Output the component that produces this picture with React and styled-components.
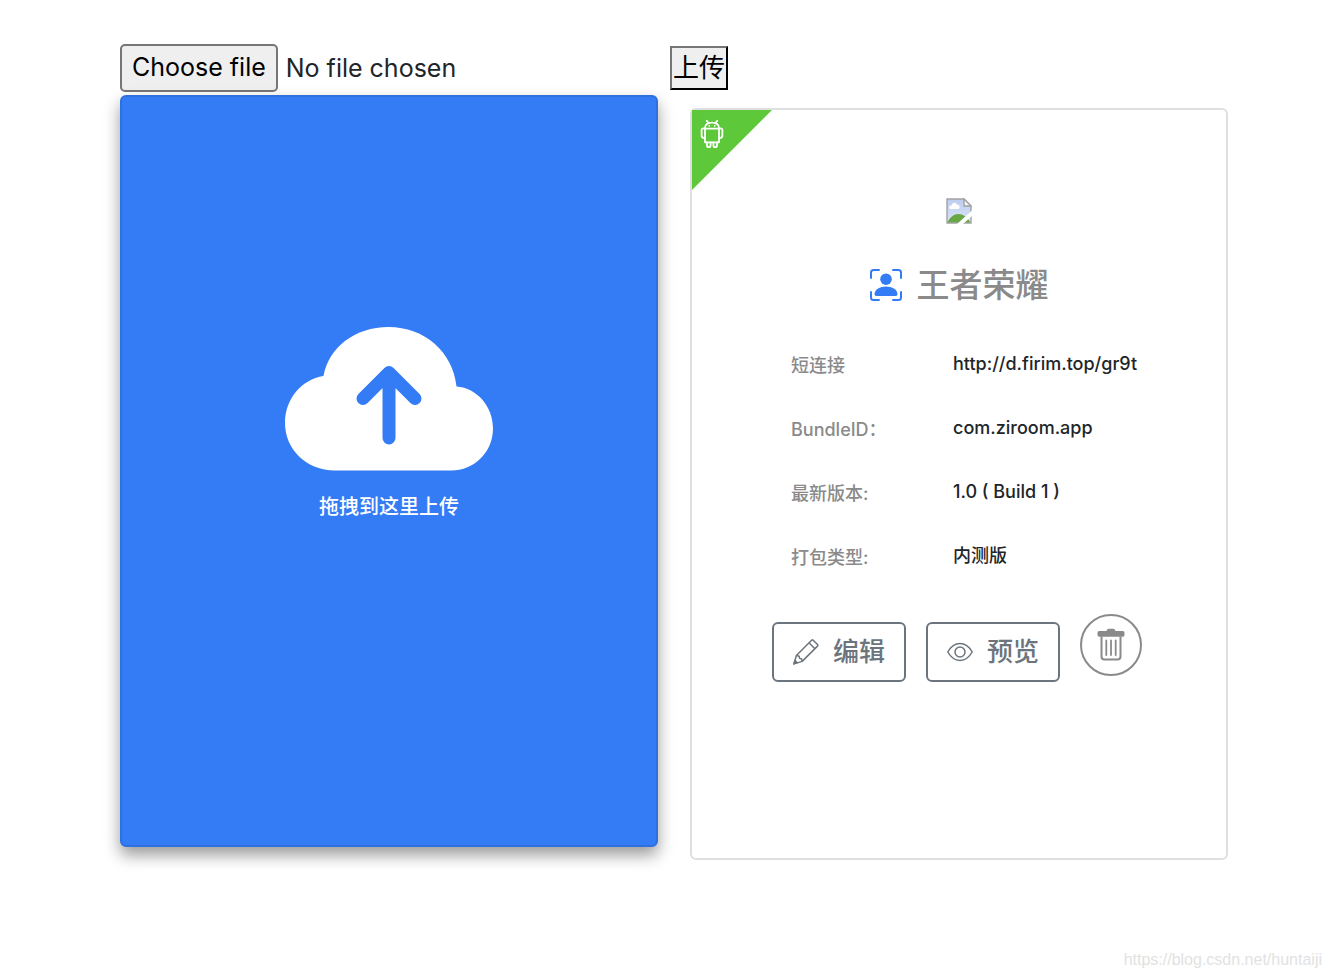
import React, { useState } from 'react';
import styled, { createGlobalStyle } from 'styled-components';

const GlobalStyle = createGlobalStyle`
    * {
        box-sizing: border-box;
    }
    body {
        margin: 0;
        background: #fff;
        color: #212529;
        font-family: Inter, "Noto Sans CJK SC", sans-serif;
    }
`
const Page = styled.div`
    min-height: 100vh;
    display: flex;
    flex-direction: column;
`
const Columns = styled.main`
    display: grid;
    grid-template-columns: 538fr 558fr;
    column-gap: 12px;
    padding: 44px 102px 40px 120px;
`
const UploadColumn = styled.section`
    display: flex;
    flex-direction: column;
    gap: 3px;
`
const AppColumn = styled.section`
    display: flex;
    flex-direction: column;
    align-items: flex-start;
    gap: 18px;
    padding-top: 2px;
`
const FilePicker = styled.div`
    display: grid;
    justify-content: start;

    > * {
        grid-area: 1 / 1;
    }
`
const FileInput = styled.input`
    width: 100%;
    min-width: 0;
    height: 100%;
    opacity: 0;
    cursor: pointer;
`
const FileLabel = styled.label`
    display: flex;
    align-items: center;
    gap: 8px;
    font-size: 25px;
    line-height: 32px;
    white-space: nowrap;
`
const FileButton = styled.span`
    padding: 5px 10px 7px;
    border: 2px solid #767676;
    border-radius: 5px;
    background: #efefef;
    color: #000;
`
const SubmitButton = styled.button`
    height: 44px;
    padding: 0 1px;
    border: 2px outset #000;
    border-color: #767676 #212121 #212121 #767676;
    background: #efefef;
    color: #000;
    font-family: inherit;
    font-size: 26px;
    line-height: 36px;
`
const DropZone = styled.div`
    min-height: 752px;
    display: flex;
    flex-direction: column;
    align-items: center;
    gap: 20px;
    padding-top: 230px;
    border: 2px solid #2f70df;
    border-radius: 6px;
    background: #347cf6;
    box-shadow: 0 8px 16px rgba(0, 0, 0, 0.4);
    color: #fff;
`
const DropText = styled.p`
    margin: 0;
    font-size: 20px;
    line-height: 32px;
    font-weight: 500;
`
const Card = styled.article`
    position: relative;
    align-self: stretch;
    min-height: 752px;
    margin-left: 20px;
    display: flex;
    flex-direction: column;
    padding-top: 88px;
    border: 2px solid #dfdfdf;
    border-radius: 6px;
`
const Corner = styled.div`
    position: absolute;
    top: 0;
    left: 0;
    width: 80px;
    height: 80px;
    padding: 9px 8px;
    background: #5ec83b;
    clip-path: polygon(0 0, 100% 0, 0 100%);
`
const AppImage = styled.div`
    height: 26px;
    display: flex;
    justify-content: center;
`
const Title = styled.h1`
    display: flex;
    justify-content: center;
    align-items: center;
    gap: 15px;
    margin: 41px 0 47px;
    color: #8a8a8a;
    font-size: 33px;
    font-weight: 500;
    line-height: 40px;
`
const Info = styled.dl`
    display: grid;
    grid-template-columns: 162px 1fr;
    row-gap: 38px;
    margin: 0;
    padding-left: 99px;
    font-size: 18px;
    font-weight: 500;
    line-height: 24px;
`
const InfoName = styled.dt`
    padding-top: 2px;
    color: #8a8a8a;
`
const InfoValue = styled.dd`
    margin: 0;
`
const Actions = styled.div`
    display: flex;
    align-items: flex-start;
    gap: 20px;
    margin-top: 44px;
    padding-left: 80px;
`
const ActionButton = styled.button`
    height: 60px;
    min-width: 134px;
    display: flex;
    align-items: center;
    justify-content: center;
    gap: 14px;
    margin-top: 8px;
    padding: 0 18px;
    border: 2px solid #6c757d;
    border-radius: 6px;
    background: #fff;
    color: #6c757d;
    font-family: inherit;
    font-size: 26px;
    line-height: 40px;
    font-weight: 500;
    white-space: nowrap;
    cursor: pointer;
`
const DeleteButton = styled.button`
    width: 62px;
    height: 62px;
    display: flex;
    align-items: center;
    justify-content: center;
    padding: 0;
    border: 2px solid #8a8a8a;
    border-radius: 50%;
    background: #fff;
    color: #8a8a8a;
    cursor: pointer;
`
const Footer = styled.footer`
    margin-top: auto;
    padding: 0 8px 8px;
    color: #e2e2e2;
    font-family: "Liberation Sans", sans-serif;
    font-size: 16px;
    line-height: 20px;
    text-align: right;
`

const CloudIcon = () => (
    <svg width="208" height="144" viewBox="0 0 208 144" fill="none">
        <path d="M50 143.5C21 143.5 0 122 0 96C0 72 16.5 52.5 38.5 49C43.5 20.5 70 0 103.5 0C139.5 0 168 25 171.5 59.5C192 61 208 79.5 208 101.5C208 125 189.5 143.5 166 143.5Z" fill="#fff" />
        <path d="M78 71.5L104 45.5L130 71.5M104 46V111" stroke="#347cf6" strokeWidth="13" strokeLinecap="round" strokeLinejoin="round" />
    </svg>
)

const AndroidIcon = () => (
    <svg width="24" height="30" viewBox="0 0 24 30" fill="none" stroke="#fff" strokeWidth="1.8" strokeLinecap="round" strokeLinejoin="round">
        <path d="M5 9.6H19V23.3H5Z" />
        <path d="M4.8 9.2C5.2 5.5 8 3.6 12 3.6S18.8 5.5 19.2 9.2" />
        <path d="M6.8 1.7L8.6 4.2M17.2 1.7L15.4 4.2" />
        <path d="M4.8 9.3H3.6Q1.6 9.3 1.6 11.3V16.8Q1.6 18.8 3.6 18.8H4.8M19.2 9.3H20.4Q22.4 9.3 22.4 11.3V16.8Q22.4 18.8 20.4 18.8H19.2" />
        <path d="M7 23.5V26.2Q7 28.2 8.8 28.2T10.6 26.2V23.5M13.4 23.5V26.2Q13.4 28.2 15.2 28.2T17 26.2V23.5" />
        <path d="M9.3 6.8H9.4M14.6 6.8H14.7" />
    </svg>
)

const BrokenImageIcon = () => (
    <svg width="26" height="26" viewBox="0 0 26 26">
        <defs>
            <linearGradient id="sky" x1="0" y1="0" x2="0" y2="1">
                <stop offset="0" stopColor="#bccdf0" />
                <stop offset="1" stopColor="#dbe4f7" />
            </linearGradient>
        </defs>
        <path d="M1 1H18L25 8V25H1Z" fill="url(#sky)" />
        <path d="M1 25C4 19 8 16 12.5 16S21 19 25 25Z" fill="#68a744" />
        <path d="M4 11C2.2 8.8 3.6 7.4 5.6 7.4C6 4.2 10.4 4 11 6.8C13.6 6.6 14.4 9 12.8 11Z" fill="#fff" />
        <path d="M1 1H18L25 8V25H1Z" fill="none" stroke="#a3a3a3" strokeWidth="1.4" />
        <path d="M18 1V8H25Z" fill="#f4f4f4" stroke="#a3a3a3" strokeWidth="1.4" />
        <path d="M11 26L26 12.5V18L17 26Z" fill="#fff" />
    </svg>
)

const UserIcon = () => (
    <svg width="32" height="32" viewBox="0 0 32 32" fill="none">
        <path d="M1 9V3.5Q1 1 3.5 1H9M23 1H28.5Q31 1 31 3.5V9M31 23V28.5Q31 31 28.5 31H23M9 31H3.5Q1 31 1 28.5V23" stroke="#347cf6" strokeWidth="2" strokeLinecap="round" />
        <circle cx="16" cy="10.2" r="5.8" fill="#347cf6" />
        <path d="M4.5 25C5 20.5 9.8 17.6 16 17.6S27 20.5 27.5 25Q27.6 27 25.6 27H6.4Q4.4 27 4.5 25Z" fill="#347cf6" />
    </svg>
)

const PencilIcon = () => (
    <svg width="26" height="26" viewBox="0 0 26 26" fill="none" stroke="currentColor" strokeWidth="1.5" strokeLinejoin="round">
        <path d="M.9 24.9L3.4 16.5L18.6 1.2Q19.4 .5 20.2 1.2L24.5 5.5Q25.2 6.3 24.5 7.1L9.2 22.4Z" />
        <path d="M16 3.8L21.9 9.7M3.4 16.5L6.2 17.2L6.6 19.4L8.6 20L9.2 22.4" />
        <path d="M.9 24.9L2 21.5L4.2 23.8Z" fill="currentColor" />
    </svg>
)

const EyeIcon = () => (
    <svg width="26" height="26" viewBox="0 0 26 26" fill="none" stroke="currentColor" strokeWidth="1.5" strokeLinejoin="round">
        <path d="M.8 13C4 7.4 8.2 4.6 13 4.6S22 7.4 25.2 13C22 18.6 17.8 21.4 13 21.4S4 18.6 .8 13Z" />
        <circle cx="13" cy="13" r="5" />
    </svg>
)

const TrashIcon = () => (
    <svg width="28" height="34" viewBox="0 0 28 34" fill="none">
        <path d="M2.2 3H9.5Q10 .8 12 .8H16Q18 .8 18.5 3H25.8Q27.5 3 27.5 4.7V7Q27.5 8.8 25.8 8.8H2.2Q.5 8.8 .5 7V4.7Q.5 3 2.2 3Z" fill="#8a8a8a" />
        <path d="M4.5 8.5V28.5Q4.5 31.5 7.5 31.5H20.5Q23.5 31.5 23.5 28.5V8.5" stroke="#8a8a8a" strokeWidth="2" />
        <path d="M9.3 12.5V27M14 12.5V27M18.7 12.5V27" stroke="#8a8a8a" strokeWidth="1.8" strokeLinecap="round" />
    </svg>
)

const info = [
    { name: '短连接', value: 'http://d.firim.top/gr9t' },
    { name: 'BundleID：', value: 'com.ziroom.app' },
    { name: '最新版本:', value: '1.0 ( Build 1 )' },
    { name: '打包类型:', value: '内测版' },
]

const Upload = () => {
    const [fileName, setFileName] = useState('');

    const onChange = (event) => {
        const file = event.target.files[0];
        setFileName(file ? file.name : '');
    }

    return (
        <UploadColumn>
            <FilePicker>
                <FileLabel htmlFor="file">
                    <FileButton>Choose file</FileButton>
                    <span>{fileName || 'No file chosen'}</span>
                </FileLabel>
                <FileInput id="file" type="file" onChange={onChange} />
            </FilePicker>
            <DropZone>
                <CloudIcon />
                <DropText>拖拽到这里上传</DropText>
            </DropZone>
        </UploadColumn>
    )
}

const AppInfo = () => (
    <AppColumn>
        <SubmitButton type="button">上传</SubmitButton>
        <Card>
            <Corner><AndroidIcon /></Corner>
            <AppImage><BrokenImageIcon /></AppImage>
            <Title><UserIcon />王者荣耀</Title>
            <Info>
                {info.map(item => (
                    <React.Fragment key={item.name}>
                        <InfoName>{item.name}</InfoName>
                        <InfoValue>{item.value}</InfoValue>
                    </React.Fragment>
                ))}
            </Info>
            <Actions>
                <ActionButton type="button"><PencilIcon />编辑</ActionButton>
                <ActionButton type="button"><EyeIcon />预览</ActionButton>
                <DeleteButton type="button" aria-label="删除"><TrashIcon /></DeleteButton>
            </Actions>
        </Card>
    </AppColumn>
)

const App = () => (
    <Page>
        <GlobalStyle />
        <Columns>
            <Upload />
            <AppInfo />
        </Columns>
        <Footer>https://blog.csdn.net/huntaiji</Footer>
    </Page>
)

export default App;
